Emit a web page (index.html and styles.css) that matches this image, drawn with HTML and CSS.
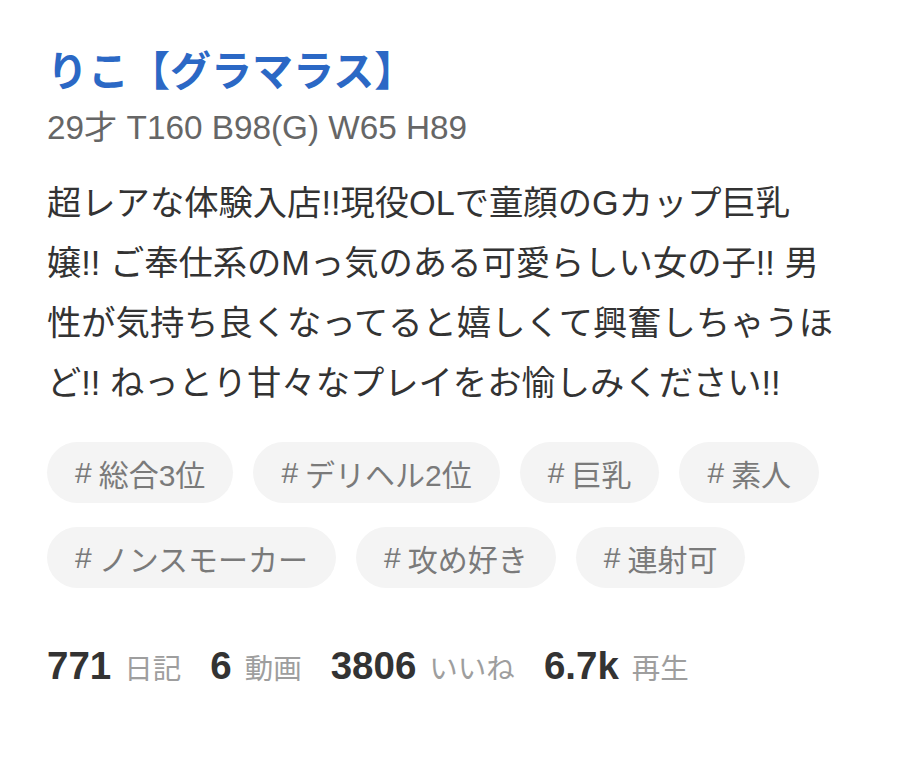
FILE: index.html
```html
<!DOCTYPE html>
<html lang="ja">
<head>
<meta charset="utf-8">
<title>りこ</title>
<link rel="stylesheet" href="styles.css">
</head>
<body>
<div class="profile">
  <h1 class="name">りこ【グラマラス】</h1>
  <p class="spec">29才 T160 B98(G) W65 H89</p>
  <p class="desc">超レアな体験入店!!現役OLで童顔のGカップ巨乳嬢!! ご奉仕系のMっ気のある可愛らしい女の子!! 男性が気持ち良くなってると嬉しくて興奮しちゃうほど!! ねっとり甘々なプレイをお愉しみください!!</p>
  <ul class="tags">
    <li class="tag"><span class="hash">#</span>総合3位</li>
    <li class="tag"><span class="hash">#</span>デリヘル2位</li>
    <li class="tag"><span class="hash">#</span>巨乳</li>
    <li class="tag"><span class="hash">#</span>素人</li>
    <li class="tag"><span class="hash">#</span>ノンスモーカー</li>
    <li class="tag"><span class="hash">#</span>攻め好き</li>
    <li class="tag"><span class="hash">#</span>連射可</li>
  </ul>
  <div class="stats">
    <span class="stat"><b class="num">771</b><span class="label">日記</span></span>
    <span class="stat"><b class="num">6</b><span class="label">動画</span></span>
    <span class="stat"><b class="num">3806</b><span class="label">いいね</span></span>
    <span class="stat"><b class="num">6.7k</b><span class="label">再生</span></span>
  </div>
</div>
</body>
</html>
```
FILE: styles.css
```css
html, body {
  margin: 0;
  padding: 0;
  background: #ffffff;
}
body {
  font-family: "Liberation Sans", "Noto Sans CJK JP", sans-serif;
  color: #333333;
}
.profile {
  padding: 46px 58px 40px 47px;
}
.name {
  margin: 0;
  font-size: 41px;
  line-height: 52px;
  font-weight: 700;
  color: #2b68c5;
}
.spec {
  margin: 10px 0 0 0;
  font-size: 33.3px;
  line-height: 40px;
  color: #666666;
}
.desc {
  margin: 25px 0 0 0;
  font-size: 34.3px;
  line-height: 60px;
  color: #333333;
}
.tags {
  list-style: none;
  margin: 29px 0 0 0;
  padding: 0;
  display: flex;
  flex-wrap: wrap;
  column-gap: 20px;
  row-gap: 24px;
}
.tag {
  height: 61px;
  padding: 0 28px;
  border-radius: 31px;
  background: #f4f4f4;
  color: #7a7a7a;
  font-size: 30px;
  display: flex;
  align-items: center;
}
.hash {
  margin-right: 7px;
}
.stats {
  margin-top: 56px;
  display: flex;
  align-items: baseline;
  gap: 29px;
}
.stat {
  display: flex;
  align-items: baseline;
  gap: 13px;
}
.num {
  font-size: 38.5px;
  font-weight: 700;
  color: #333333;
}
.label {
  font-size: 28.5px;
  color: #9e9e9e;
}
```
